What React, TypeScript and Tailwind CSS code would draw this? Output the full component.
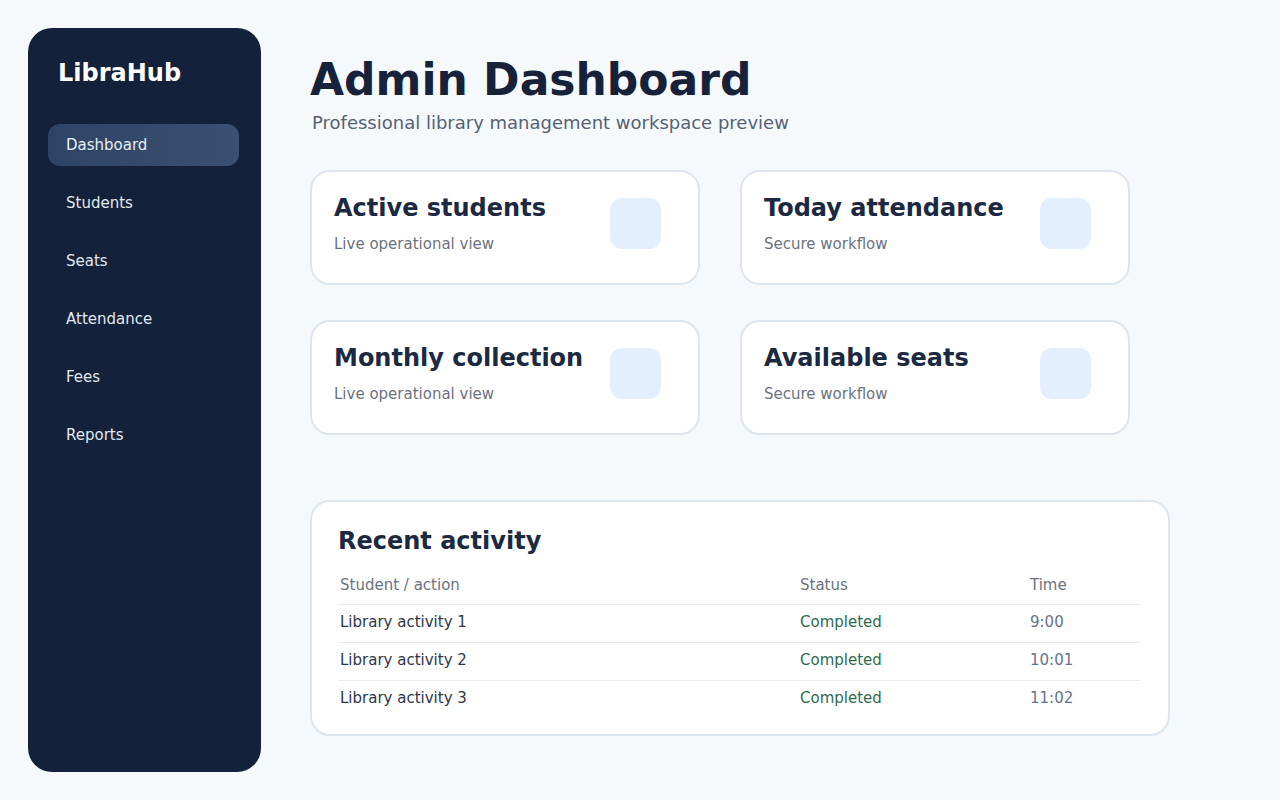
import React from "react";

const nav = ["Dashboard", "Students", "Seats", "Attendance", "Fees", "Reports"];
const cards = [
  { t: "Active students", s: "Live operational view" },
  { t: "Today attendance", s: "Secure workflow" },
  { t: "Monthly collection", s: "Live operational view" },
  { t: "Available seats", s: "Secure workflow" },
];
const rows = [
  { a: "Library activity 1", t: "9:00" },
  { a: "Library activity 2", t: "10:01" },
  { a: "Library activity 3", t: "11:02" },
];

export default function App() {
  return (
    <div
      className="flex h-[800px] w-[1280px] bg-[#f5f9fc] p-7 gap-[49px]"
      style={{ fontFamily: '"DejaVu Sans", sans-serif' }}
    >
      <aside className="w-[233px] h-[744px] shrink-0 rounded-[24px] bg-[#14213a] pl-5 pr-[22px] pt-[30px]">
        <div className="pl-[10px] text-[24px] font-bold leading-[30px] text-white">LibraHub</div>
        <nav className="mt-[36px] flex flex-col gap-4">
          {nav.map((n, i) => (
            <div
              key={n}
              className={
                "h-[42px] flex items-center pl-[18px] rounded-[12px] text-[15px] " +
                (i === 0
                  ? "bg-gradient-to-r from-[#2e4465] to-[#3b5071] text-[#e6edf7]"
                  : "text-[#e2e8f0]")
              }
            >
              {n}
            </div>
          ))}
        </nav>
      </aside>
      <main className="flex-1 pt-[25px]">
        <h1 className="text-[44px] font-bold leading-[54px] text-[#16213a]">Admin Dashboard</h1>
        <p className="ml-[2px] mt-[4px] text-[18px] leading-[24px] text-[#556275]">
          Professional library management workspace preview
        </p>
        <div className="mt-[35px] grid grid-cols-[390px_390px] gap-x-[40px] gap-y-[35px]">
          {cards.map((c) => (
            <div
              key={c.t}
              className="h-[115px] rounded-[20px] border-2 border-[#dde5ee] bg-white pl-[22px] pr-[37px] pt-[21px] flex justify-between"
            >
              <div>
                <div className="text-[24px] font-bold leading-[30px] text-[#1b2942]">{c.t}</div>
                <div className="mt-[11px] text-[15px] leading-[20px] text-[#6b7280]">{c.s}</div>
              </div>
              <div className="mt-[5px] h-[51px] w-[51px] shrink-0 rounded-[12px] bg-[#e3efff]" />
            </div>
          ))}
        </div>
        <section className="mt-[65px] w-[860px] h-[236px] rounded-[20px] border-2 border-[#dde5ee] bg-white px-[26px] pt-[24px]">
          <h2 className="text-[24px] font-bold leading-[30px] text-[#1b2942]">Recent activity</h2>
          <table className="mt-[10px] w-[802px] text-[15px] border-collapse">
            <thead>
              <tr className="border-b border-[#e8edf2] h-[38px] text-[#6b7280]">
                <th className="text-left font-normal pl-[2px] w-[462px]">Student / action</th>
                <th className="text-left font-normal w-[230px]">Status</th>
                <th className="text-left font-normal">Time</th>
              </tr>
            </thead>
            <tbody>
              {rows.map((r, i) => (
                <tr key={r.a} className={"h-[38px] " + (i < 2 ? "border-b border-[#e8edf2]" : "")}>
                  <td className="pl-[2px] pb-[2px] text-[#2d3748]">{r.a}</td>
                  <td className="pb-[2px] text-[#2f6b4f]">Completed</td>
                  <td className="pb-[2px] text-[#64748b]">{r.t}</td>
                </tr>
              ))}
            </tbody>
          </table>
        </section>
      </main>
    </div>
  );
}
